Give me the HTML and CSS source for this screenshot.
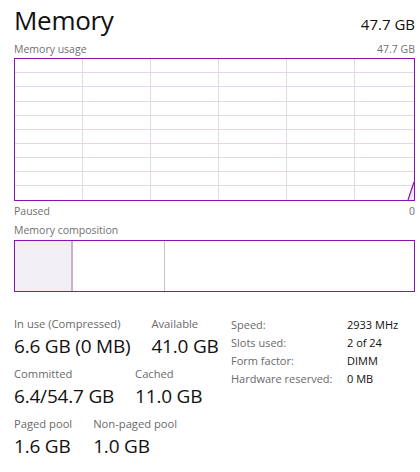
FILE: index.html
```html
<!DOCTYPE html>
<html lang="en">
<head>
<meta charset="utf-8">
<title>Memory</title>
<link rel="stylesheet" href="styles.css">
</head>
<body>
<main class="page">
  <header class="head">
    <h1 class="title">Memory</h1>
    <span class="total">47.7 GB</span>
  </header>
  <div class="caption-row">
    <span>Memory usage</span>
    <span>47.7 GB</span>
  </div>
  <div class="graph">
    <svg class="graph-svg" viewBox="0 0 399 141" preserveAspectRatio="none" aria-hidden="true">
      <g stroke="#e2d8e8" stroke-width="1" shape-rendering="crispEdges">
        <line x1="0" y1="13.5" x2="399" y2="13.5"/>
        <line x1="0" y1="27.5" x2="399" y2="27.5"/>
        <line x1="0" y1="42.5" x2="399" y2="42.5"/>
        <line x1="0" y1="56.5" x2="399" y2="56.5"/>
        <line x1="0" y1="70.5" x2="399" y2="70.5"/>
        <line x1="0" y1="84.5" x2="399" y2="84.5"/>
        <line x1="0" y1="98.5" x2="399" y2="98.5"/>
        <line x1="0" y1="112.5" x2="399" y2="112.5"/>
        <line x1="0" y1="126.5" x2="399" y2="126.5"/>
        <line x1="67.5" y1="0" x2="67.5" y2="141"/>
        <line x1="135.5" y1="0" x2="135.5" y2="141"/>
        <line x1="203.5" y1="0" x2="203.5" y2="141"/>
        <line x1="271.5" y1="0" x2="271.5" y2="141"/>
        <line x1="339.5" y1="0" x2="339.5" y2="141"/>
      </g>
      <polygon points="393,141 399,123 399,141" fill="#f1e4f5"/>
      <polyline points="393,141 399,123" fill="none" stroke="#8b12ae" stroke-width="1.2"/>
    </svg>
  </div>
  <div class="caption-row under">
    <span>Paused</span>
    <span>0</span>
  </div>
  <div class="caption-row comp-caption">
    <span>Memory composition</span>
  </div>
  <div class="composition">
    <div class="seg seg-inuse" style="width:56px"></div>
    <div class="seg seg-modified" style="width:91px"></div>
    <div class="seg seg-rest"></div>
  </div>

  <section class="stats">
    <div class="stats-left">
      <div class="stat-row">
        <div class="stat">
          <div class="stat-label">In use (Compressed)</div>
          <div class="stat-value">6.6 GB (0 MB)</div>
        </div>
        <div class="stat">
          <div class="stat-label">Available</div>
          <div class="stat-value">41.0 GB</div>
        </div>
      </div>
      <div class="stat-row">
        <div class="stat">
          <div class="stat-label">Committed</div>
          <div class="stat-value">6.4/54.7 GB</div>
        </div>
        <div class="stat">
          <div class="stat-label">Cached</div>
          <div class="stat-value">11.0 GB</div>
        </div>
      </div>
      <div class="stat-row">
        <div class="stat">
          <div class="stat-label">Paged pool</div>
          <div class="stat-value">1.6 GB</div>
        </div>
        <div class="stat">
          <div class="stat-label">Non-paged pool</div>
          <div class="stat-value">1.0 GB</div>
        </div>
      </div>
    </div>
    <dl class="props">
      <dt>Speed:</dt><dd>2933 MHz</dd>
      <dt>Slots used:</dt><dd>2 of 24</dd>
      <dt>Form factor:</dt><dd>DIMM</dd>
      <dt>Hardware reserved:</dt><dd>0 MB</dd>
    </dl>
  </section>
</main>
</body>
</html>
```
FILE: styles.css
```css
html, body {
  margin: 0;
  padding: 0;
  background: #ffffff;
}
body {
  font-family: "Open Sans", "Noto Sans", "Liberation Sans", sans-serif;
  color: #111111;
}
.page {
  padding: 3px 5px 0 14px;
  width: 401px;
}
.head {
  display: flex;
  justify-content: space-between;
  align-items: baseline;
  height: 38px;
}
.title {
  margin: 0;
  font-size: 26px;
  font-weight: 400;
  line-height: 34px;
  letter-spacing: -0.3px;
}
.total {
  font-size: 15px;
  line-height: 20px;
}
.caption-row {
  display: flex;
  justify-content: space-between;
  font-size: 10.5px;
  line-height: 16px;
  color: #707070;
  height: 17px;
}
.graph {
  height: 141px;
  border: 1px solid #8b12ae;
}
.graph-svg {
  display: block;
  width: 100%;
  height: 100%;
}
.under {
  margin-top: 2px;
}
.comp-caption {
  margin-top: 2px;
  height: 18px;
}
.composition {
  display: flex;
  height: 50px;
  border: 1px solid #8b12ae;
}
.seg {
  height: 100%;
}
.seg-inuse {
  background: #f2eff4;
  border-right: 2px solid #c6b2d2;
}
.seg-modified {
  border-right: 1px solid #cdbcd6;
}
.seg-rest {
  flex: 1;
}
.stats {
  display: flex;
  margin-top: 24px;
}
.stats-left {
  width: 217px;
  display: flex;
  flex-direction: column;
  gap: 6px;
}
.stat-row {
  display: flex;
  gap: 21px;
}
.stat-label {
  font-size: 11.2px;
  line-height: 16px;
  color: #6a6a6a;
}
.stat-value {
  font-size: 19px;
  line-height: 28px;
  color: #111111;
  letter-spacing: -0.2px;
}
.props {
  margin: 0;
  display: grid;
  grid-template-columns: 116px auto;
  grid-auto-rows: 18px;
  font-size: 11px;
  line-height: 18px;
  align-content: start;
}
.props dt {
  color: #6a6a6a;
}
.props dd {
  margin: 0;
  color: #111111;
}
```
